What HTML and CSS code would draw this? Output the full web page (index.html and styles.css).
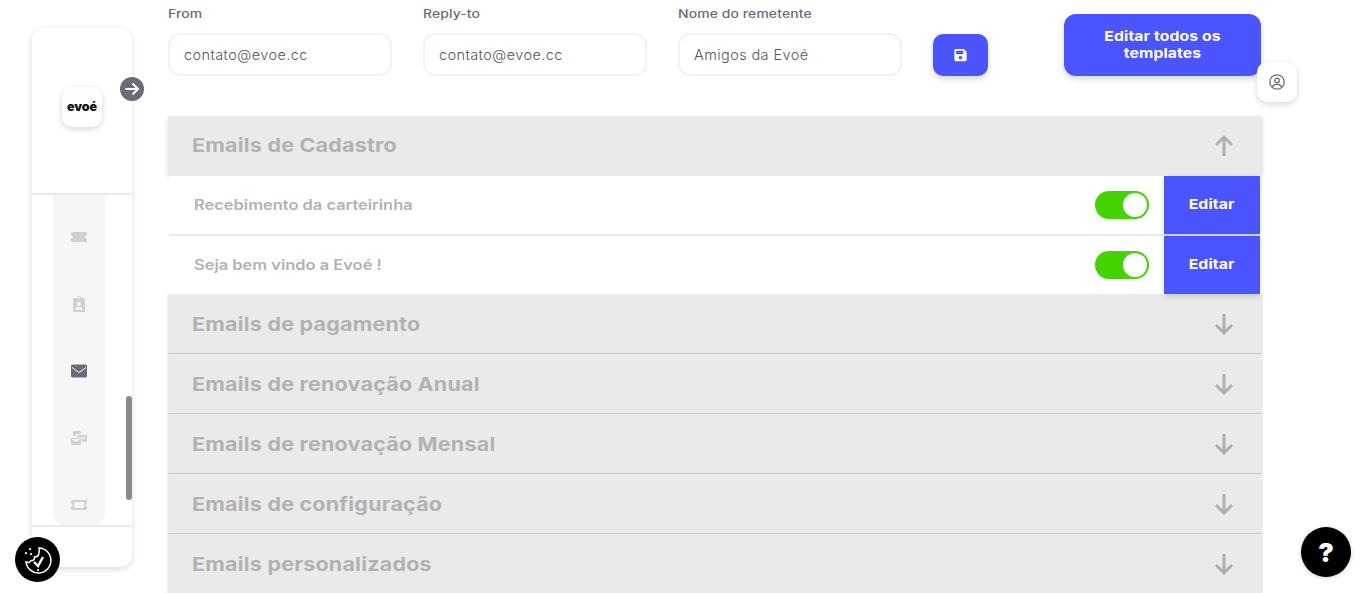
FILE: index.html
```html
<!DOCTYPE html>
<html lang="pt-BR">
<head>
<meta charset="utf-8">
<title>Templates de email</title>
<link rel="stylesheet" href="styles.css">
</head>
<body>
<div class="app">
  <aside class="sidebar">
    <div class="side-head">
      <div class="logo">evoé</div>
    </div>
    <div class="side-list">
      <nav class="pill">
        <svg class="nav-icon off" viewBox="0 0 16 12"><path d="M1 1h14a1 1 0 0 1 1 1v2.200a1.800 1.800 0 0 0 0 3.600V10a1 1 0 0 1-1 1H1a1 1 0 0 1-1-1V7.800a1.800 1.800 0 0 0 0-3.600V2a1 1 0 0 1 1-1z"/></svg>
        <svg class="nav-icon off" viewBox="0 0 12 16"><path fill-rule="evenodd" d="M1 2h3a2 2 0 0 1 4 0h3a1 1 0 0 1 1 1v12a1 1 0 0 1-1 1H1a1 1 0 0 1-1-1V3a1 1 0 0 1 1-1zm5-1a1 1 0 1 0 0 2 1 1 0 0 0 0-2zm0 5a2 2 0 1 0 0 4 2 2 0 0 0 0-4zM2.500 14h7v-1.200c0-1-1-1.800-2-1.800h-3c-1 0-2 .8-2 1.800z"/></svg>
        <svg class="nav-icon on" viewBox="0 0 16 13"><rect width="16" height="13" rx="1.500"/><path d="M1 3l7 5 7-5" fill="none" stroke="#fff" stroke-width="1"/></svg>
        <svg class="nav-icon off" viewBox="0 0 16 14"><path d="M3 0h7v3H4.500v2H2V1a1 1 0 0 1 1-1zM6 4h9a1 1 0 0 1 1 1v5a1 1 0 0 1-1 1h-4V7a1 1 0 0 0-1-1H6zm6 2v2h2V6zM0 7h9a1 1 0 0 1 1 0v6a1 1 0 0 1-1 1H1a1 1 0 0 1-1-1zm1 1.500L5 11l4-2.500V8H1z"/></svg>
        <svg class="nav-icon off" viewBox="0 0 16 12"><path fill-rule="evenodd" d="M1 1h14a1 1 0 0 1 1 1v2.200a1.800 1.800 0 0 0 0 3.600V10a1 1 0 0 1-1 1H1a1 1 0 0 1-1-1V7.800a1.800 1.800 0 0 0 0-3.600V2a1 1 0 0 1 1-1zm2 2v6h10V3z"/></svg>
      </nav>
      <div class="thumb"></div>
    </div>
    <div class="side-foot"></div>
  </aside>

  <main class="main">
    <form class="top">
      <label class="field"><span class="field-label">From</span><input class="field-input" value="contato@evoe.cc"></label>
      <label class="field"><span class="field-label">Reply-to</span><input class="field-input" value="contato@evoe.cc"></label>
      <label class="field"><span class="field-label">Nome do remetente</span><input class="field-input" value="Amigos da Evoé"></label>
      <button class="save" type="button" aria-label="Salvar">
        <svg viewBox="0 0 448 512" width="13" height="14"><path fill="#fff" d="M433.900 129.900l-83.900-83.900A48 48 0 0 0 316.100 32H48C21.500 32 0 53.500 0 80v352c0 26.500 21.500 48 48 48h352c26.500 0 48-21.500 48-48V163.900a48 48 0 0 0-14.100-34zM224 416c-35.300 0-64-28.700-64-64s28.700-64 64-64 64 28.700 64 64-28.700 64-64 64zm96-304.500V212c0 6.600-5.400 12-12 12H76c-6.600 0-12-5.400-12-12V108c0-6.600 5.400-12 12-12h228.500c3.200 0 6.200 1.300 8.500 3.500l3.500 3.500c2.300 2.300 3.500 5.300 3.500 8.500z"/></svg>
      </button>
      <button class="edit-all" type="button"><span class="edit-all-text">Editar todos os templates</span></button>
    </form>

    <section class="accordion">
      <div class="acc-head open">
        <h2>Emails de Cadastro</h2>
        <svg class="arrow" viewBox="0 0 20 22"><path d="M10 21V2M2 10l8-8 8 8"/></svg>
      </div>
      <div class="acc-body">
        <div class="row">
          <span class="row-name">Recebimento da carteirinha</span>
          <span class="switch"><span class="knob"></span></span>
          <button class="edit" type="button"><span class="edit-text">Editar</span></button>
        </div>
        <div class="row">
          <span class="row-name">Seja bem vindo a Evoé !</span>
          <span class="switch"><span class="knob"></span></span>
          <button class="edit" type="button"><span class="edit-text">Editar</span></button>
        </div>
      </div>
      <div class="acc-head">
        <h2>Emails de pagamento</h2>
        <svg class="arrow" viewBox="0 0 20 22"><path d="M10 1v19M2 12l8 8 8-8"/></svg>
      </div>
      <div class="acc-head">
        <h2>Emails de renovação Anual</h2>
        <svg class="arrow" viewBox="0 0 20 22"><path d="M10 1v19M2 12l8 8 8-8"/></svg>
      </div>
      <div class="acc-head">
        <h2>Emails de renovação Mensal</h2>
        <svg class="arrow" viewBox="0 0 20 22"><path d="M10 1v19M2 12l8 8 8-8"/></svg>
      </div>
      <div class="acc-head">
        <h2>Emails de configuração</h2>
        <svg class="arrow" viewBox="0 0 20 22"><path d="M10 1v19M2 12l8 8 8-8"/></svg>
      </div>
      <div class="acc-head">
        <h2>Emails personalizados</h2>
        <svg class="arrow" viewBox="0 0 20 22"><path d="M10 1v19M2 12l8 8 8-8"/></svg>
      </div>
    </section>
  </main>
</div>

<button class="float toggle" type="button" aria-label="Expandir">
  <svg viewBox="0 0 16 16" width="16" height="16"><path d="M1.500 8h12.500M8.500 2.500L14 8l-5.500 5.500" fill="none" stroke="#fff" stroke-width="2"/></svg>
</button>
<button class="float user" type="button" aria-label="Perfil">
  <svg viewBox="0 0 16 16" width="16" height="16" fill="none" stroke="#6a6b76" stroke-width="1.300"><circle cx="8" cy="8" r="7.200"/><circle cx="8" cy="6.400" r="2.200"/><path d="M3.300 13.300c.6-2 2.300-3 4.700-3s4.100 1 4.700 3"/></svg>
</button>
<button class="float cookie" type="button" aria-label="Cookies">
  <svg viewBox="0 0 32 32" width="32" height="32" fill="none" stroke="#fff" stroke-width="1.500"><path d="M17 4a12.500 12.500 0 1 1-13 14c2 1 4 .5 5-1.500 2 .5 4-1 3.500-3.500 3 0 5-2 4.500-5 .5-1.500.5-3 0-4z"/><path d="M12 18l4 4 5-9" stroke-width="2.400"/><path d="M16 26v.1M4 9v.1M8 5v.1M9 10v.1" stroke-width="2.200" stroke-linecap="round"/></svg>
</button>
<button class="float help" type="button">?</button>
</body>
</html>
```
FILE: styles.css
```css
* { box-sizing: border-box; }
html, body { margin: 0; height: 593px; overflow: hidden; background: #fff; }
body { font-family: "Inter", "Liberation Sans", sans-serif; color: #6a6b76; }
button { font-family: inherit; border: 0; cursor: pointer; }

.app { display: flex; height: 593px; overflow: hidden; }

.sidebar {
  flex: none; width: 100px; height: 539px; margin: 28px 0 0 32px;
  display: flex; flex-direction: column; background: #fff;
  border-radius: 12px; box-shadow: 0 2px 6px rgba(0,0,0,.14);
}
.side-head { height: 167px; border-bottom: 2px solid #e9e9e9; display: flex; align-items: flex-end; justify-content: center; padding-bottom: 66px; }
.logo {
  width: 40px; height: 40px; border-radius: 10px; background: #fff;
  box-shadow: 0 2px 6px rgba(0,0,0,.16); padding-bottom: 1px;
  display: flex; align-items: center; justify-content: center;
  color: #111; font-weight: 900; font-size: 12.500px; letter-spacing: -.1px;
}
.side-list { height: 330px; position: relative; display: flex; }
.pill {
  width: 52px; margin-left: 21px; background: #f6f6f6; border-radius: 0 0 12px 12px;
  display: flex; flex-direction: column; align-items: center; padding-top: 34px;
}
.nav-icon { flex: none; width: 16px; height: 16px; margin-bottom: 51px; }
.nav-icon.off { fill: #d0d0d0; }
.nav-icon.on { fill: #6a6b76; }
.thumb { position: absolute; right: 0; top: 201px; width: 6px; height: 104px; background: #8a8a8a; border-radius: 3px; }
.side-foot { flex: 1; border-top: 2px solid #e9e9e9; }

.main { flex: none; width: 1094px; margin-left: 36px; }

.top { display: flex; align-items: flex-end; height: 76px; }
.field { display: flex; flex-direction: column; width: 224px; margin-right: 31px; }
.field-label { font-size: 11.500px; font-weight: 500; line-height: 14px; letter-spacing: .1px; margin-bottom: 12px; color: #6a6b76; transform: scaleX(1.21); transform-origin: left center; }
.field-input {
  width: 224px; height: 43px; padding: 0 14px; border: 2px solid #f3f3f3; border-radius: 12px;
  font-family: "Inter", sans-serif; font-size: 14.500px; font-weight: 300; letter-spacing: .4px; color: #55565f; background: #fff; outline: 0;
}
.save {
  width: 55px; height: 42px; background: #4b55ff; border-radius: 10px; flex: none;
  box-shadow: 0 3px 6px rgba(0,0,0,.16); display: flex; align-items: center; justify-content: center;
}
.edit-all {
  width: 197px; height: 62px; margin-left: 76px; flex: none; background: #4b55ff; color: #fff; border-radius: 12px;
  font-size: 13.500px; font-weight: 700; line-height: 17px; letter-spacing: .1px; padding: 0 30px;
  box-shadow: 0 3px 6px rgba(0,0,0,.16);
}
.edit-all-text { display: block; transform: scaleX(1.165); }

.accordion { margin-top: 40px; }
.acc-head {
  height: 60px; background: #eaeaea; border-bottom: 1px solid #cfcfcf; display: flex; align-items: center;
  justify-content: space-between; padding: 0 28px 0 24px;
  box-shadow: 0 1px 3px rgba(0,0,0,.14);
}
.acc-head.open { border-bottom: 0; position: relative; z-index: 1; box-shadow: 0 2px 5px rgba(0,0,0,.14); }
.acc-head h2 { margin: 2px 0 0; font-size: 19px; font-weight: 700; color: #b2b2b2; letter-spacing: .2px; transform: scaleX(1.13); transform-origin: left center; }
.acc-head.open h2 { margin: 0 0 2px; }
.arrow { flex: none; width: 20px; height: 22px; fill: none; stroke: #b0b0b0; stroke-width: 3; }

.acc-body { margin: 0 2px 0 1px; position: relative; z-index: 1; }
.row { display: flex; align-items: center; height: 60px; border-bottom: 2px solid #e9e9e9; background: #fff; padding-left: 25px; }
.row:last-child { height: 58px; border-bottom: 0; }
.row-name { flex: 1; padding-bottom: 2px; font-size: 14px; font-weight: 600; color: #b2b2b2; transform: scaleX(1.175); transform-origin: left center; }
.switch { width: 54px; height: 28px; background: #43d300; border-radius: 14px; margin-right: 15px; display: flex; justify-content: flex-end; padding: 2px; }
.knob { width: 24px; height: 24px; border-radius: 50%; background: #fff; }
.edit {
  width: 96px; height: 100%; background: #4b55ff; color: #fff; font-size: 13.500px; font-weight: 700; letter-spacing: .1px;
  box-shadow: 0 3px 6px rgba(0,0,0,.14); padding: 0 0 2px;
}
.edit-text { display: inline-block; transform: scaleX(1.17); }

.float { position: absolute; display: flex; align-items: center; justify-content: center; padding: 0; }
.toggle { left: 120px; top: 77px; width: 24px; height: 24px; border-radius: 50%; background: #6a6b76; }
.user { left: 1257px; top: 62px; width: 40px; height: 40px; background: #fff; border-radius: 10px; box-shadow: 0 2px 6px rgba(0,0,0,.16); }
.cookie { left: 15px; top: 537px; width: 45px; height: 45px; border-radius: 50%; background: #000; }
.help { left: 1301px; top: 527px; width: 50px; height: 50px; border-radius: 50%; background: #000; color: #fff; font-size: 26px; font-weight: 900; box-shadow: 0 1px 4px rgba(0,0,0,.2); }
```
